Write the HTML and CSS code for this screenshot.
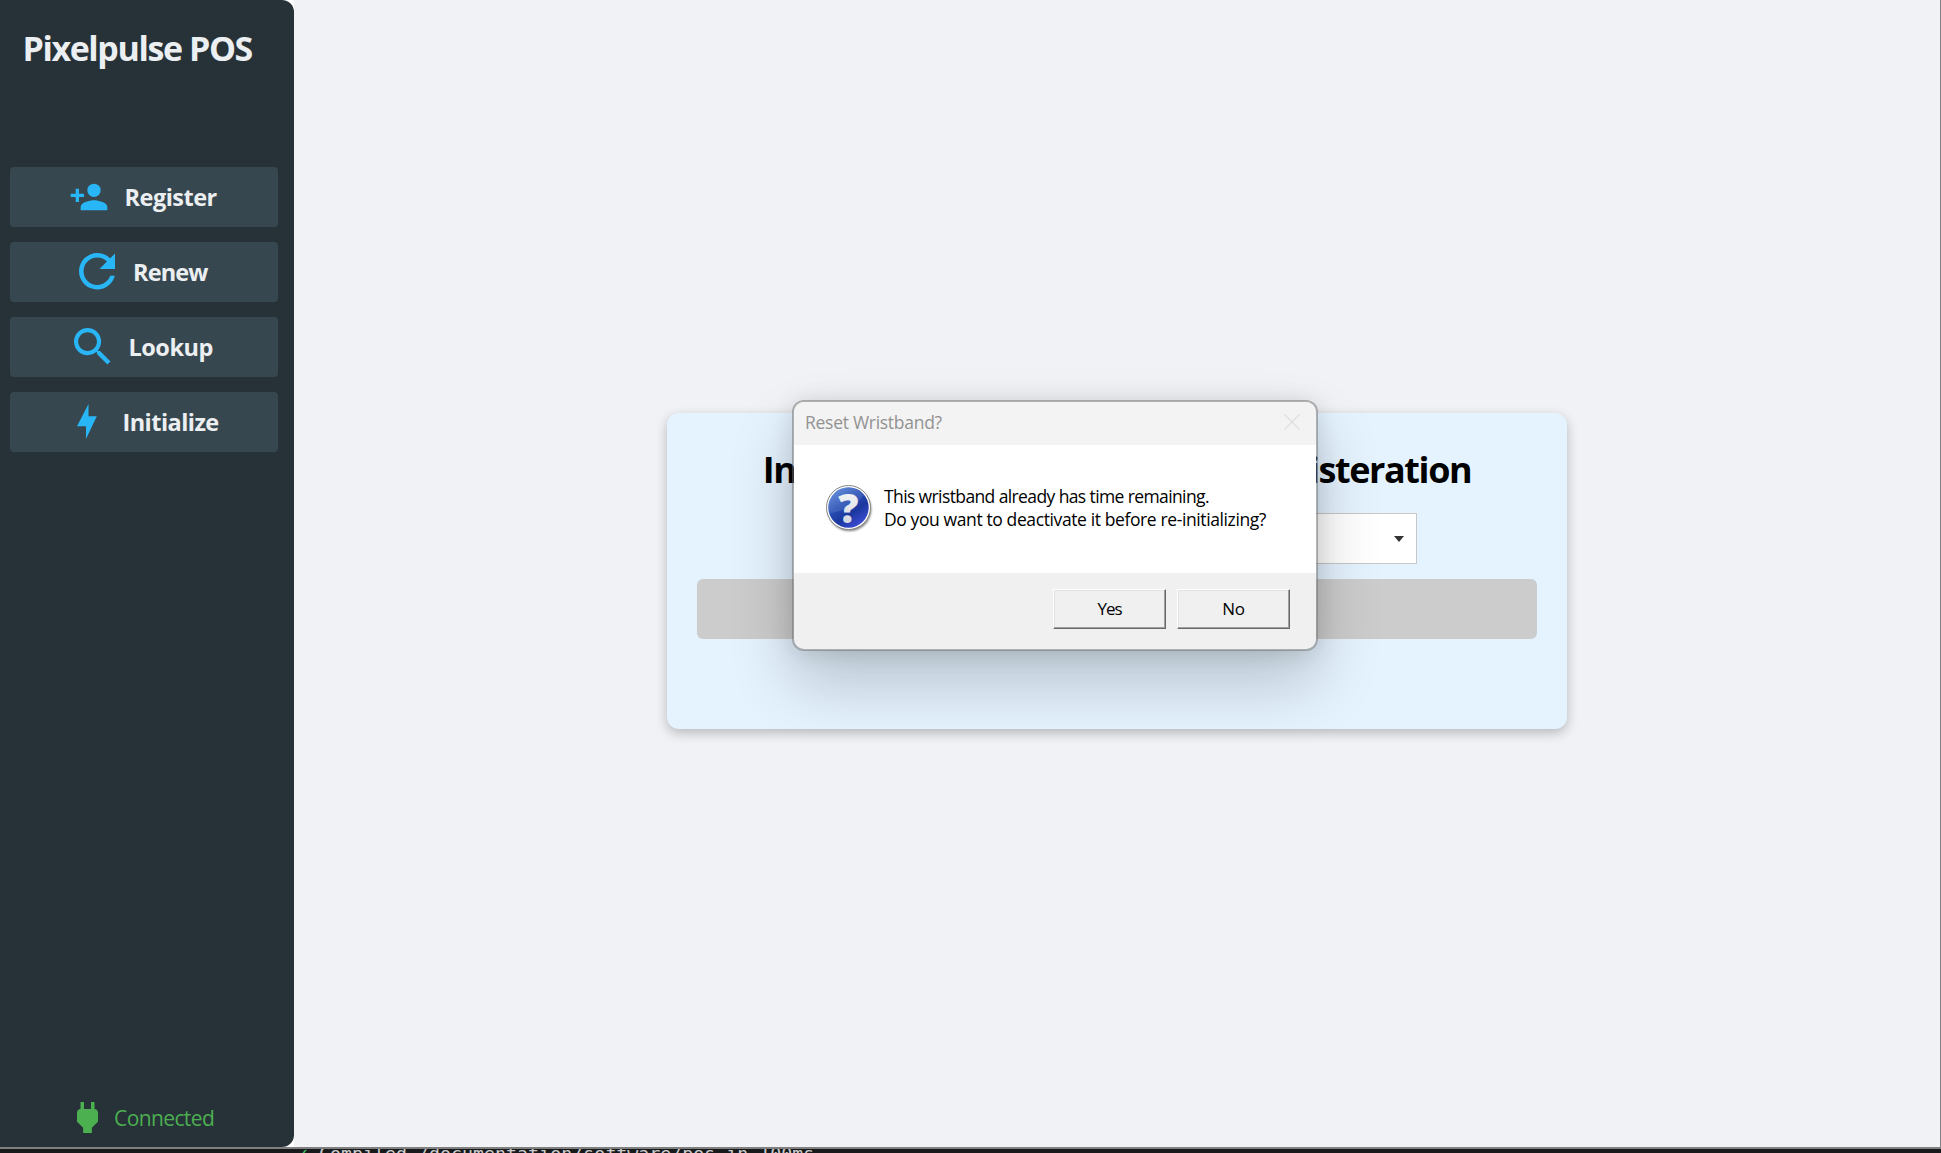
FILE: index.html
```html
<!DOCTYPE html>
<html lang="en">
<head>
<meta charset="utf-8">
<title>Pixelpulse POS</title>
<link rel="stylesheet" href="styles.css">
</head>
<body>
<div class="window">
  <aside class="sidebar">
    <h1 class="brand">Pixelpulse POS</h1>
    <nav class="nav">
      <button class="nav-item"><span class="icon"><svg width="40" height="40" viewBox="0 0 24 24"><path d="M15 14C12.33 14 7 15.33 7 18V20H23V18C23 15.33 17.67 14 15 14M6 10V7H4V10H1V12H4V15H6V12H9V10M15 12A4 4 0 0 0 19 8A4 4 0 0 0 15 4A4 4 0 0 0 11 8A4 4 0 0 0 15 12Z"/></svg></span><span class="label register">Register</span></button>
      <button class="nav-item"><span class="icon"><svg width="36.5" height="36.5" viewBox="4 4 16 16"><path d="M17.65 6.35C16.2 4.9 14.21 4 12 4A8 8 0 0 0 4 12A8 8 0 0 0 12 20C15.73 20 18.84 17.45 19.73 14H17.65C16.83 16.33 14.61 18 12 18A6 6 0 0 1 6 12A6 6 0 0 1 12 6C13.66 6 15.14 6.69 16.22 7.78L13 11H20V4L17.65 6.35Z"/></svg></span><span class="label renew">Renew</span></button>
      <button class="nav-item"><span class="icon"><svg width="36.5" height="36.5" viewBox="3 3 17.49 17.49"><path d="M15.5 14H14.71L14.43 13.73C15.41 12.59 16 11.11 16 9.5A6.5 6.5 0 1 0 9.5 16C11.11 16 12.59 15.41 13.73 14.43L14 14.71V15.5L19 20.49L20.49 19L15.5 14M9.5 14C7.01 14 5 11.99 5 9.5S7.01 5 9.5 5S14 7.01 14 9.5S11.99 14 9.5 14Z"/></svg></span><span class="label lookup">Lookup</span></button>
      <button class="nav-item"><span class="icon"><svg width="20" height="35" viewBox="0 0 20 35"><path d="M11.5 0V12.3H19.8L9 35V22.3H0Z"/></svg></span><span class="label initialize">Initialize</span></button>
    </nav>
    <div class="status">
      <svg width="21" height="31" viewBox="6 3 12 18" preserveAspectRatio="none"><path d="M16 7V3H14V7H10V3H8V7C7 7 6 8 6 9V14.5L9.5 18V21H14.5V18L18 14.5V9C18 8 17 7 16 7Z"/></svg>
      <span class="status-text">Connected</span>
    </div>
  </aside>
  <main class="content">
    <section class="card">
      <h2 class="card-title">Initialize Wristband for New Registeration</h2>
      <div class="select"><svg width="10" height="6" viewBox="0 0 10 6"><path d="M0 0H10L5 6Z"/></svg></div>
      <button class="submit" disabled aria-label="Initialize"></button>
    </section>
  </main>
</div>
<footer class="terminal"><span class="check">✓</span><span>Compiled /documentation/software/pos in 100ms</span></footer>

<div class="dialog" role="dialog">
  <header class="dialog-bar">
    <span class="dialog-title">Reset Wristband?</span>
    <svg class="close" width="16" height="16" viewBox="0 0 16 16"><path d="M.5 .5L15.5 15.5M15.5 .5L.5 15.5"/></svg>
  </header>
  <div class="dialog-body">
    <svg class="question" width="50" height="50" viewBox="0 0 50 50">
      <defs>
        <linearGradient id="blue" x1="0.1" y1="0" x2="0.8" y2="1"><stop offset="0" stop-color="#5b87dc"/><stop offset=".4" stop-color="#2850b4"/><stop offset=".65" stop-color="#1b379e"/><stop offset="1" stop-color="#4150dc"/></linearGradient>
        <linearGradient id="mark" x1="0" y1="0" x2="0" y2="1"><stop offset="0" stop-color="#fff"/><stop offset="1" stop-color="#c9cdd9"/></linearGradient>
        <filter id="soft" x="-20%" y="-20%" width="140%" height="140%"><feGaussianBlur stdDeviation="1.1"/></filter>
      </defs>
      <circle cx="25.5" cy="26.3" r="21.8" fill="#000" opacity=".5" filter="url(#soft)"/>
      <circle cx="24.5" cy="24.5" r="22" fill="#fff" stroke="#858585"/>
      <circle cx="24.5" cy="24.5" r="20.2" fill="url(#blue)"/>
      <path d="M5 30C16 29 31 24 40 12A20 20 0 0 0 5 20Z" fill="#fff" opacity=".1"/>
      <text x="24.4" y="39.5" text-anchor="middle" class="mark" fill="url(#mark)">?</text>
    </svg>
    <p class="message"><span class="line first">This wristband already has time remaining.</span><span class="line second">Do you want to deactivate it before re-initializing?</span></p>
  </div>
  <footer class="dialog-actions">
    <button class="action yes">Yes</button>
    <button class="action no">No</button>
  </footer>
</div>
</body>
</html>
```
FILE: styles.css
```css
* { box-sizing: border-box; }
body {
  margin: 0;
  height: 1153px;
  overflow: hidden;
  display: flex;
  flex-direction: column;
  background: #18191b;
  font-family: "Open Sans", "Noto Sans", sans-serif;
}
button { font: inherit; padding: 0; }
svg { display: block; flex: none; }

.window {
  height: 1149px;
  flex: none;
  display: flex;
  background: #fff;
  border-right: 1px solid #808184;
  border-bottom: 2px solid #808080;
}
.sidebar {
  width: 294px;
  flex: none;
  display: flex;
  flex-direction: column;
  padding: 24px 16px 11px 10px;
  background: #263238;
  border-radius: 0 12px 12px 0;
}
.brand {
  margin: 0 0 92.5px;
  height: 50px;
  padding-left: 12.5px;
  font-size: 34px;
  line-height: 49px;
  font-weight: 700;
  letter-spacing: -1.4px;
  color: #eceff1;
  white-space: nowrap;
}
.nav { display: flex; flex-direction: column; gap: 15px; }
.nav-item {
  display: flex;
  align-items: center;
  justify-content: center;
  gap: 16px;
  height: 60px;
  padding-right: 1px;
  border: 0;
  border-radius: 4px;
  background: #37474f;
  color: #eceff1;
  font-size: 23.5px;
  font-weight: 700;
}
.icon { width: 40px; display: flex; justify-content: center; fill: #29b6f6; }
.label { padding-top: 0; text-align: left; white-space: nowrap; }
.register { width: 94px; letter-spacing: -.5px; }
.renew { width: 77px; letter-spacing: -.85px; }
.lookup { width: 86px; letter-spacing: -.5px; }
.initialize { width: 98px; letter-spacing: -.55px; }

.status {
  margin-top: auto;
  padding-left: 67px;
  display: flex;
  align-items: center;
  gap: 16px;
  fill: #4caf50;
  color: #4caf50;
}
.status-text { font-size: 21px; line-height: 35px; letter-spacing: -.6px; padding-top: 2px; }

.content { flex: 1; display: flex; align-items: flex-start; justify-content: center; padding-top: 413px; background: #f0f2f6; }
.card {
  width: 900px;
  height: 316px;
  padding: 30px;
  display: flex;
  flex-direction: column;
  align-items: center;
  background: #e5f3ff;
  border-radius: 12px;
  box-shadow: 0 4px 12px rgba(0, 0, 0, .24);
}
.card-title {
  margin: 0 0 13px;
  height: 57px;
  font-size: 36px;
  line-height: 53px;
  font-weight: 700;
  letter-spacing: -1.4px;
  word-spacing: 3px;
  color: #000;
  white-space: nowrap;
}
.select {
  width: 600px;
  height: 51px;
  display: flex;
  align-items: center;
  justify-content: flex-end;
  padding-right: 12px;
  border: 1px solid #c8c8c8;
  background: #fff;
  fill: #333;
}
.submit { width: 840px; height: 60px; margin-top: 15px; border: 0; border-radius: 6px; background: #ccc; }

.terminal {
  height: 4px;
  flex: none;
  overflow: hidden;
  display: flex;
  gap: 10px;
  padding-left: 297px;
  font-family: "DejaVu Sans Mono", monospace;
  font-size: 18.3px;
  line-height: 20px;
  color: #ccc;
  white-space: pre;
}
.terminal span { margin-top: -5px; }
.terminal .check { width: 12px; color: #3fc56b; }

.dialog {
  position: absolute;
  left: 792px;
  top: 400px;
  width: 526px;
  height: 251px;
  border: 2px solid rgba(110, 110, 110, .5);
  border-radius: 12px;
  background: #f0f0f0;
  background-clip: padding-box;
  box-shadow: 0 32px 64px rgba(0, 0, 0, .2), 0 2px 22px rgba(0, 0, 0, .12);
  overflow: hidden;
  display: flex;
  flex-direction: column;
}
.dialog-bar {
  height: 43px;
  display: flex;
  align-items: center;
  justify-content: space-between;
  padding: 0 16px 3px 11px;
  background: #f3f3f3;
  color: #929292;
}
.dialog-title { font-size: 17.5px; letter-spacing: -.28px; }
.close { stroke: #dedede; stroke-width: 1.2; }
.dialog-body { height: 128px; display: flex; align-items: flex-start; padding: 38px 0 0 30px; background: #fff; }
.mark { font-family: "Open Sans", sans-serif; font-size: 40px; font-weight: 800; }
.message { margin: 2px 0 0 10px; display: flex; flex-direction: column; font-size: 17.5px; line-height: 23px; color: #000; }
.line { white-space: nowrap; }
.first { letter-spacing: -.61px; }
.second { letter-spacing: -.39px; }
.dialog-actions { flex: 1; display: flex; justify-content: flex-end; gap: 11px; padding: 16px 26px 0 0; }
.action {
  width: 113px;
  height: 40px;
  border: 1px solid;
  border-color: #fff #696969 #696969 #fff;
  box-shadow: inset -1px -1px #a0a0a0, inset 1px 1px #e3e3e3;
  background: #f0f0f0;
  color: #000;
  font-size: 17px;
  padding-bottom: 1px;
}
.yes { letter-spacing: -1px; }
.no { letter-spacing: -.3px; }
```
